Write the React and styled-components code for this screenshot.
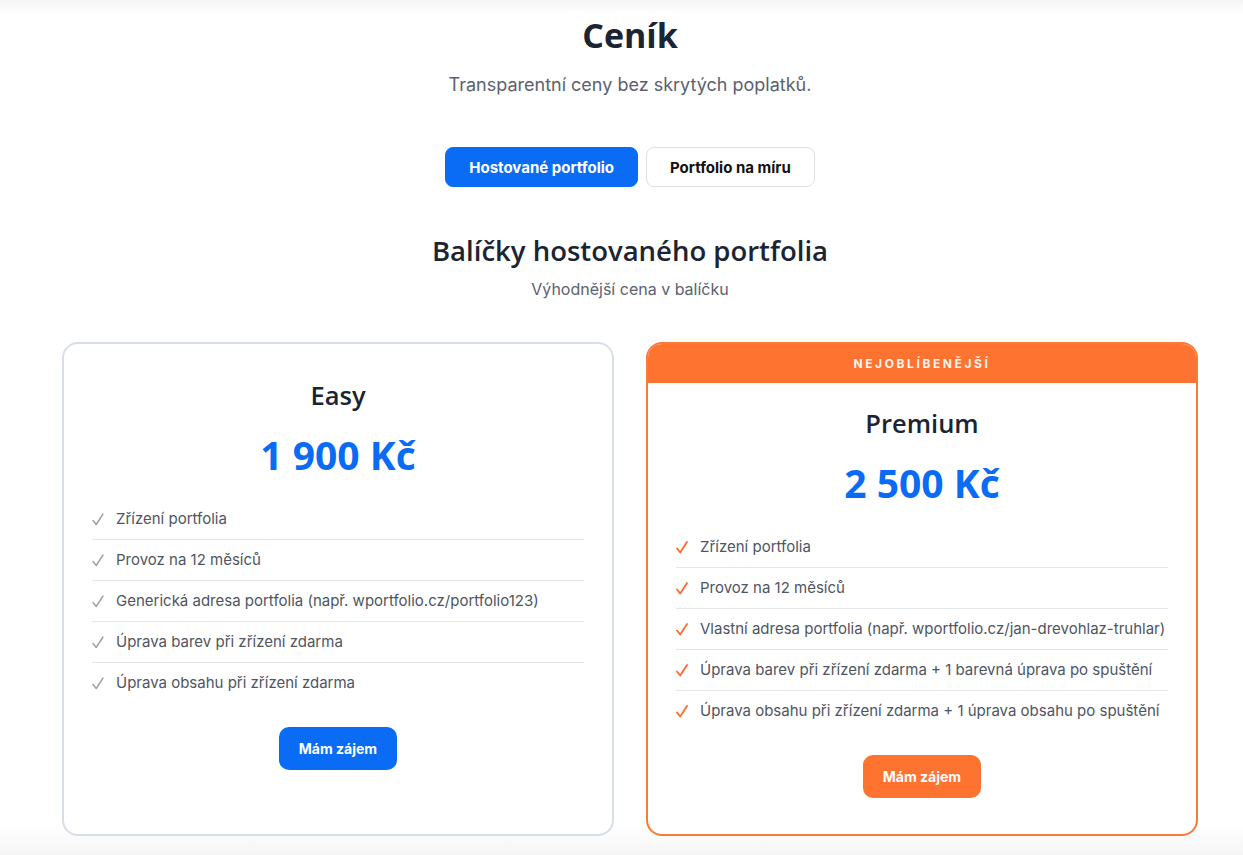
import React from 'react';
import styled, { createGlobalStyle } from 'styled-components';

const GlobalStyle = createGlobalStyle`
  html, body {
    margin: 0;
    padding: 0;
  }
  body {
    font-family: Inter, "Noto Sans", sans-serif;
    color: #1b2432;
    background: #fff;
  }
  * {
    box-sizing: border-box;
  }
`;

const Page = styled.div`
  min-height: 855px;
  padding: 13px 0 0 17px;
  background: linear-gradient(
    to bottom,
    #f5f5f5 0px,
    #ffffff 13px,
    #ffffff 824px,
    #f5f5f5 855px
  );
`;

const Container = styled.div`
  width: 1136px;
  margin: 0 auto;
  display: flex;
  flex-direction: column;
  align-items: center;
`;

const Title = styled.h1`
  margin: 0;
  font-family: "Open Sans", sans-serif;
  font-size: 34px;
  line-height: 44px;
  font-weight: 700;
  color: #1b2432;
`;

const Subtitle = styled.p`
  margin: 15px 0 0;
  font-size: 18px;
  line-height: 26px;
  color: #5b6270;
`;

const Tabs = styled.div`
  display: flex;
  gap: 8px;
  margin-top: 49px;
`;

const Tab = styled.button`
  height: 40px;
  padding: 0 23px;
  border-radius: 8px;
  font-family: Inter, sans-serif;
  font-size: 15px;
  font-weight: 700;
  cursor: pointer;
  border: 1px solid ${p => (p.$active ? '#0a6cf5' : '#dcdfe4')};
  background: ${p => (p.$active ? '#0a6cf5' : '#fff')};
  color: ${p => (p.$active ? '#fff' : '#111')};
`;

const SectionTitle = styled.h2`
  margin: 45px 0 0;
  font-family: "Open Sans", sans-serif;
  font-size: 27.5px;
  line-height: 38px;
  font-weight: 600;
  color: #1b2432;
`;

const SectionSub = styled.p`
  margin: 8px 0 0;
  font-size: 16px;
  line-height: 22px;
  color: #5b6270;
`;

const Grid = styled.div`
  display: grid;
  grid-template-columns: 1fr 1fr;
  gap: 32px;
  width: 100%;
  margin-top: 42px;
`;

const Card = styled.div`
  display: flex;
  flex-direction: column;
  border: 2px solid ${p => (p.$featured ? '#f97a3a' : '#d8dee8')};
  border-radius: 16px;
  overflow: hidden;
  background: #fff;
`;

const Ribbon = styled.div`
  height: 39px;
  display: flex;
  align-items: center;
  justify-content: center;
  background: #ff7330;
  color: #fff4ee;
  font-size: 12px;
  font-weight: 700;
  letter-spacing: 2.6px;
`;

const CardBody = styled.div`
  display: flex;
  flex-direction: column;
  align-items: center;
  padding: ${p => (p.$featured ? '25px' : '36px')} 28px 36px;
`;

const PlanName = styled.h3`
  margin: 0;
  font-family: "Open Sans", sans-serif;
  font-size: 25.5px;
  line-height: 30px;
  font-weight: 600;
  color: #1b2432;
`;

const Price = styled.div`
  margin-top: 23px;
  font-family: "Open Sans", sans-serif;
  font-size: 39px;
  line-height: 44px;
  font-weight: 700;
  color: #0a6cf5;
`;

const Features = styled.ul`
  list-style: none;
  margin: 22px 0 0;
  padding: 0;
  width: 100%;
`;

const Feature = styled.li`
  display: flex;
  align-items: center;
  padding: 10px 0;
  line-height: 20px;
  font-size: 15px;
  color: #4e5563;
  border-bottom: 1px solid #e3e6ea;
  &:last-child {
    border-bottom: none;
  }
`;

const CheckIcon = styled.svg`
  width: 12px;
  height: 13px;
  flex-shrink: 0;
  margin: 0 12px 0 0;
  color: ${p => (p.$featured ? '#ff6a2a' : '#9aa0a8')};
`;

const CtaButton = styled.button`
  margin-top: 24px;
  height: 43px;
  padding: 0 20px;
  border: none;
  border-radius: 10px;
  font-family: Inter, sans-serif;
  font-size: 14px;
  font-weight: 700;
  color: #fff;
  cursor: pointer;
  background: ${p => (p.$featured ? '#ff7330' : '#0a6cf5')};
`;

const plans = [
  {
    name: 'Easy',
    price: '1 900 Kč',
    featured: false,
    features: [
      'Zřízení portfolia',
      'Provoz na 12 měsíců',
      'Generická adresa portfolia (např. wportfolio.cz/portfolio123)',
      'Úprava barev při zřízení zdarma',
      'Úprava obsahu při zřízení zdarma',
    ],
  },
  {
    name: 'Premium',
    price: '2 500 Kč',
    featured: true,
    features: [
      'Zřízení portfolia',
      'Provoz na 12 měsíců',
      'Vlastní adresa portfolia (např. wportfolio.cz/jan-drevohlaz-truhlar)',
      'Úprava barev při zřízení zdarma + 1 barevná úprava po spuštění',
      'Úprava obsahu při zřízení zdarma + 1 úprava obsahu po spuštění',
    ],
  },
];

function Check({ featured }) {
  return (
    <CheckIcon $featured={featured} viewBox="0 0 12 13" fill="none">
      <path
        d="M1 7.5 L4.2 11.5 L11 1"
        stroke="currentColor"
        strokeWidth={featured ? 1.8 : 1.4}
        strokeLinecap="round"
        strokeLinejoin="round"
      />
    </CheckIcon>
  );
}

function PlanCard({ plan }) {
  return (
    <Card $featured={plan.featured}>
      {plan.featured && <Ribbon>NEJOBLÍBENĚJŠÍ</Ribbon>}
      <CardBody $featured={plan.featured}>
        <PlanName>{plan.name}</PlanName>
        <Price>{plan.price}</Price>
        <Features>
          {plan.features.map(f => (
            <Feature key={f}>
              <Check featured={plan.featured} />
              {f}
            </Feature>
          ))}
        </Features>
        <CtaButton $featured={plan.featured}>Mám zájem</CtaButton>
      </CardBody>
    </Card>
  );
}

export default function App() {
  return (
    <>
      <GlobalStyle />
      <Page>
        <Container>
          <Title>Ceník</Title>
          <Subtitle>Transparentní ceny bez skrytých poplatků.</Subtitle>
          <Tabs>
            <Tab $active>Hostované portfolio</Tab>
            <Tab>Portfolio na míru</Tab>
          </Tabs>
          <SectionTitle>Balíčky hostovaného portfolia</SectionTitle>
          <SectionSub>Výhodnější cena v balíčku</SectionSub>
          <Grid>
            {plans.map(p => (
              <PlanCard key={p.name} plan={p} />
            ))}
          </Grid>
        </Container>
      </Page>
    </>
  );
}
